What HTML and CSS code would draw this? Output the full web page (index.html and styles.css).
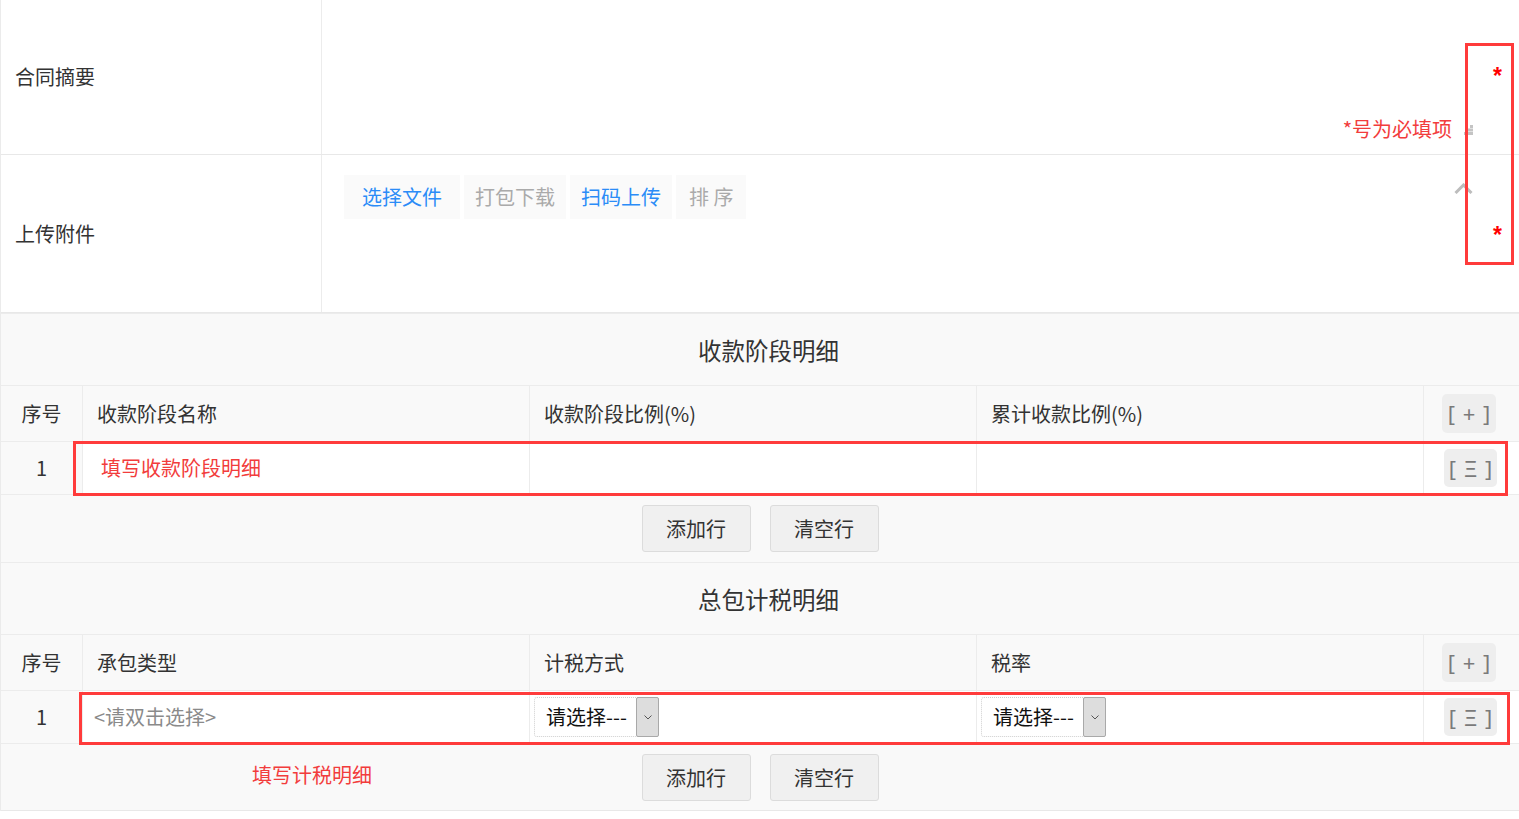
FILE: index.html
```html
<!DOCTYPE html>
<html lang="zh-CN">
<head>
  <meta charset="UTF-8">
  <title>合同信息</title>
  <link rel="stylesheet" href="styles.css">
</head>
<body>

  <div class="form">
    <div class="form-row summary-row">
      <div class="form-label">合同摘要</div>
      <div class="form-field">
        <div class="textarea">
          <div class="hint-line">
            <span class="hint">*号为必填项</span>
            <svg class="grip" width="9" height="10" viewBox="0 0 9 10">
              <rect x="6" y="0" width="3" height="3" fill="#c4c4c4"/>
              <rect x="3" y="3.5" width="3" height="3" fill="#c4c4c4"/>
              <rect x="6" y="3.5" width="3" height="3" fill="#c4c4c4"/>
              <rect x="0" y="7" width="3" height="3" fill="#c4c4c4"/>
              <rect x="3" y="7" width="3" height="3" fill="#c4c4c4"/>
              <rect x="6" y="7" width="3" height="3" fill="#c4c4c4"/>
            </svg>
          </div>
        </div>
        <div class="req"><span>*</span></div>
      </div>
    </div>

    <div class="form-row upload-row">
      <div class="form-label">上传附件</div>
      <div class="form-field">
        <div class="uploader">
          <div class="file-btns">
            <span class="file-btn primary first">选择文件</span>
            <span class="file-btn muted">打包下载</span>
            <span class="file-btn primary">扫码上传</span>
            <span class="file-btn muted">排 序</span>
          </div>
          <svg class="collapse" width="19" height="11" viewBox="0 0 19 11">
            <polyline points="1.5,10 9.5,2 17.5,10" fill="none" stroke="#bdbdbd" stroke-width="3"/>
          </svg>
        </div>
        <div class="req"><span>*</span></div>
      </div>
    </div>

    <div class="required-mark"></div>
  </div>

  <div class="detail">
    <div class="detail-title">收款阶段明细</div>
    <div class="grid-row head-row">
      <div class="cell seq">序号</div>
      <div class="cell">收款阶段名称</div>
      <div class="cell">收款阶段比例(%)</div>
      <div class="cell">累计收款比例(%)</div>
      <div class="cell act"><span class="row-btn">[ + ]</span></div>
    </div>
    <div class="grid-row data-row">
      <div class="cell seq">1</div>
      <div class="cell note-cell">填写收款阶段明细</div>
      <div class="cell"></div>
      <div class="cell"></div>
      <div class="cell act"><span class="row-btn">[ Ξ ]</span></div>
      <div class="mark mark-pay"></div>
    </div>
    <div class="btn-row">
      <button class="btn">添加行</button>
      <button class="btn">清空行</button>
    </div>

    <div class="detail-title">总包计税明细</div>
    <div class="grid-row head-row">
      <div class="cell seq">序号</div>
      <div class="cell">承包类型</div>
      <div class="cell">计税方式</div>
      <div class="cell">税率</div>
      <div class="cell act"><span class="row-btn">[ + ]</span></div>
    </div>
    <div class="grid-row data-row">
      <div class="cell seq">1</div>
      <div class="cell picker">&lt;请双击选择&gt;</div>
      <div class="cell select-cell">
        <div class="select">
          <span class="select-text">请选择---</span>
          <span class="select-arrow">
            <svg width="8" height="5" viewBox="0 0 8 5"><polyline points="0.5,0.5 4,4 7.5,0.5" fill="none" stroke="#555" stroke-width="1"/></svg>
          </span>
        </div>
      </div>
      <div class="cell select-cell">
        <div class="select">
          <span class="select-text">请选择---</span>
          <span class="select-arrow">
            <svg width="8" height="5" viewBox="0 0 8 5"><polyline points="0.5,0.5 4,4 7.5,0.5" fill="none" stroke="#555" stroke-width="1"/></svg>
          </span>
        </div>
      </div>
      <div class="cell act"><span class="row-btn">[ Ξ ]</span></div>
      <div class="mark mark-tax"></div>
    </div>
    <div class="btn-row last">
      <span class="tax-note">填写计税明细</span>
      <button class="btn">添加行</button>
      <button class="btn">清空行</button>
    </div>
  </div>

</body>
</html>
```

FILE: styles.css
```css
* {
  box-sizing: border-box;
}

body {
  margin: 0;
  background: #ffffff;
  font-family: "Noto Sans CJK SC", "Noto Sans", sans-serif;
  font-size: 20px;
  color: #333;
}

/* top form */
.form {
  position: relative;
  background: #fff;
  border-left: 1px solid #ebebeb;
}

.form-row {
  display: grid;
  grid-template-columns: 321px 1fr;
  border-bottom: 1px solid #e8e8e8;
}

.summary-row {
  height: 155px;
}

.upload-row {
  height: 158px;
}

.form-label {
  display: flex;
  align-items: center;
  padding-left: 14px;
  border-right: 1px solid #ececec;
  line-height: 24px;
}

.form-field {
  display: grid;
  grid-template-columns: 1fr 43px;
}

.textarea {
  display: flex;
  flex-direction: column;
  justify-content: flex-end;
  align-items: flex-end;
  padding: 0 3px 13px 0;
}

.hint-line {
  display: flex;
  align-items: center;
  line-height: 24px;
}

.hint {
  color: #f23c3c;
}

.grip {
  margin-left: 12px;
  margin-top: 2px;
}

.req {
  padding: 66px 0 0 17px;
  color: #ff0000;
  font-family: "Liberation Sans", sans-serif;
  font-weight: bold;
  font-size: 23px;
  line-height: 20px;
}

.upload-row .req {
  padding-top: 70px;
}

.uploader {
  display: flex;
  align-items: flex-start;
  justify-content: space-between;
  padding: 20px 3px 0 22px;
}

.file-btns {
  display: flex;
  gap: 4px;
}

.file-btn {
  height: 44px;
  line-height: 44px;
  padding: 0 11px;
  background: #fafafa;
}

.file-btn.first {
  padding: 0 18px;
}

.file-btn.primary {
  color: #2b8cf7;
}

.file-btn.muted {
  color: #aaa;
}

.file-btn.muted:last-child {
  padding: 0 13px;
}

.collapse {
  margin-top: 8px;
}

.required-mark {
  position: absolute;
  left: 1464px;
  top: 43px;
  width: 49px;
  height: 222px;
  border: 3px solid #ff3b3b;
}

/* detail tables */
.detail {
  background: #f9f9f9;
  border-left: 1px solid #ebebeb;
}

.detail-title {
  height: 72px;
  display: flex;
  align-items: center;
  justify-content: center;
  padding-left: 17px;
  font-size: 23.5px;
  border-top: 1px solid #ececec;
}

.grid-row {
  position: relative;
  display: grid;
  grid-template-columns: 81px 447px 447px 447px 1fr;
  border-top: 1px solid #ececec;
}

.head-row {
  height: 56px;
}

.data-row {
  height: 53px;
}

.cell {
  display: flex;
  align-items: center;
  padding-left: 14px;
  border-left: 1px solid #ececec;
  line-height: 24px;
}

.cell.seq {
  justify-content: center;
  padding-left: 0;
  border-left: none;
}

.data-row .cell {
  background: #fff;
}

.data-row .cell.seq {
  background: #f9f9f9;
}

.note-cell {
  padding-left: 18px;
  color: #f23c3c;
}

.picker {
  padding-left: 11px;
  color: #8a8a8a;
}

.cell.act {
  padding-left: 18px;
}

.data-row .cell.act {
  padding-left: 20px;
}

.row-btn {
  display: inline-block;
  width: 54px;
  height: 39px;
  line-height: 39px;
  text-align: center;
  background: #eee;
  border-radius: 5px;
  color: #7a7a7a;
  font-family: "Noto Sans", sans-serif;
  font-size: 22px;
  letter-spacing: 1px;
  text-indent: 1px;
}

.data-row .row-btn {
  width: 53px;
  height: 38px;
  line-height: 38px;
}

.select-cell {
  padding-left: 4px;
}

.select {
  display: flex;
  height: 40px;
  width: 125px;
  border: 1px dotted #cfcfcf;
  border-radius: 3px;
  background: #fff;
}

.select-text {
  flex: 1;
  padding-left: 11px;
  line-height: 38px;
  color: #111;
}

.select-arrow {
  width: 23px;
  margin: -1px -1px -1px 0;
  display: flex;
  align-items: center;
  justify-content: center;
  background: #dddddd;
  border: 1px solid #a9a9a9;
  border-radius: 2px;
}

.mark {
  position: absolute;
  z-index: 2;
  border: 3px solid #ff3b3b;
  pointer-events: none;
}

.mark-pay {
  left: 72px;
  top: -1px;
  width: 1435px;
  height: 55px;
}

.mark-tax {
  left: 78px;
  top: 1px;
  width: 1431px;
  height: 53px;
}

.btn-row {
  position: relative;
  height: 68px;
  display: flex;
  justify-content: center;
  align-items: flex-start;
  gap: 19px;
  padding-top: 10px;
  border-top: 1px solid #ececec;
}

.btn-row.last {
  height: 68px;
  border-bottom: 1px solid #e8e8e8;
}

.btn {
  width: 109px;
  height: 47px;
  background: #f0f0f0;
  border: 1px solid #dcdcdc;
  border-radius: 3px;
  font-family: inherit;
  font-size: 20px;
  color: #333;
}

.tax-note {
  position: absolute;
  left: 251px;
  top: 19px;
  line-height: 24px;
  color: #f23c3c;
}
```
